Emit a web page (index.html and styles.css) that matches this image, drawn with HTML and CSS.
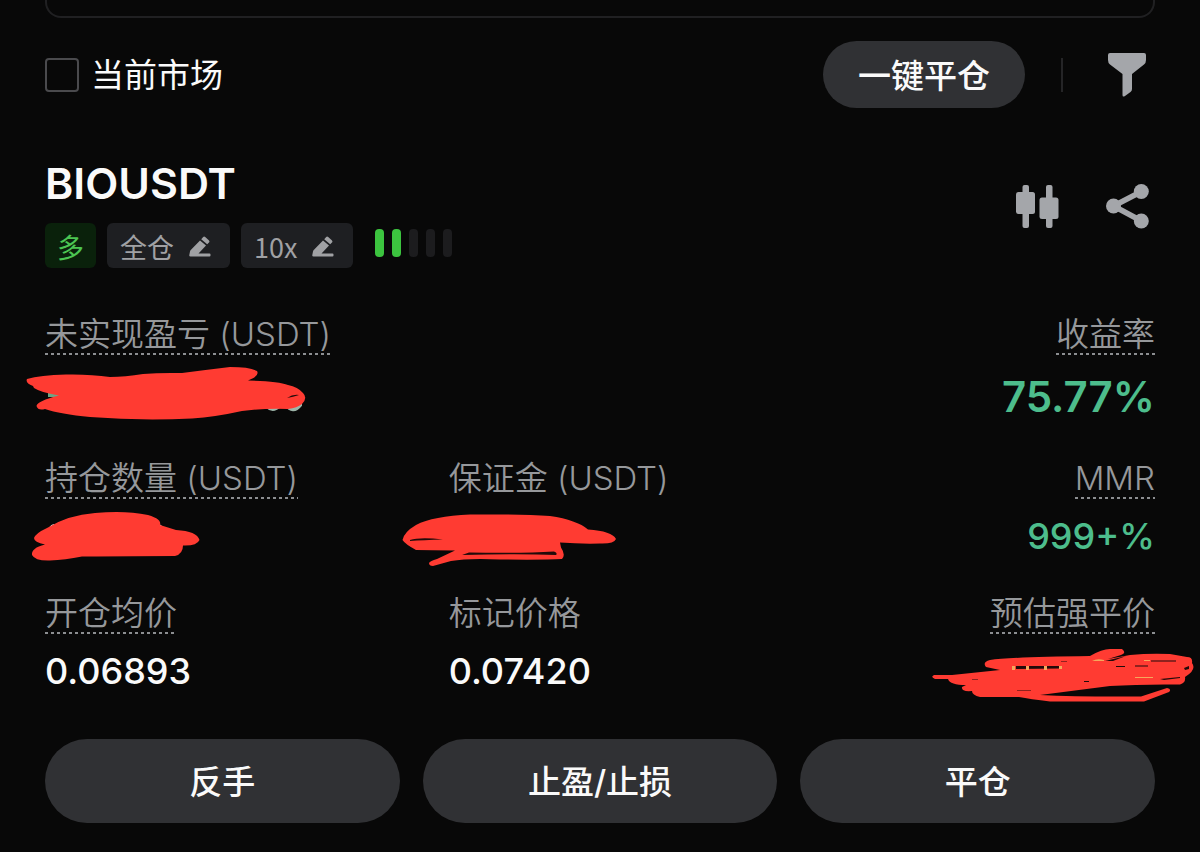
FILE: index.html
```html
<!DOCTYPE html>
<html lang="zh-CN">
<head>
<meta charset="utf-8">
<meta name="viewport" content="width=device-width, initial-scale=1">
<title>BIOUSDT</title>
<link rel="stylesheet" href="styles.css">
</head>
<body>
<main class="page">
  <div class="panel-end"></div>

  <div class="toolbar">
    <label class="market"><input class="market-box" type="checkbox">当前市场</label>
    <div class="toolbar-actions">
      <button class="pill pill-small" type="button">一键平仓</button>
      <span class="divider"></span>
      <button class="icon-button" type="button" aria-label="筛选">
        <svg width="38" height="44" viewBox="0 0 38 44"><path d="M2 0H36Q38 0 38 2V7Q38 10 36 11.500L24 21V36Q24 38 22.500 39L17 43Q14.500 44.500 14.500 42V21L2 11.500Q0 10 0 7V2Q0 0 2 0Z"/></svg>
      </button>
    </div>
  </div>

  <section class="position">
    <header class="position-head">
      <div>
        <h1 class="symbol">BIOUSDT</h1>
        <div class="tags">
          <span class="tag tag-long">多</span>
          <button class="tag" type="button">全仓
            <svg width="22" height="21" viewBox="0 0 22 21"><path d="M14 1.200Q15 0 16.200 1L19.800 4.200Q21 5.400 20 6.400L18.200 8.200L12.200 3.200ZM11 4.600L17 9.600L9.500 17.500H20.500Q21.500 17.500 21.500 18.500V19.500Q21.500 20.500 20.500 20.500H1.500Q0 20.500 .300 19L1 15.500Q1.200 14.500 2 13.700Z"/></svg>
          </button>
          <button class="tag" type="button">10x
            <svg width="22" height="21" viewBox="0 0 22 21"><path d="M14 1.200Q15 0 16.200 1L19.800 4.200Q21 5.400 20 6.400L18.200 8.200L12.200 3.200ZM11 4.600L17 9.600L9.500 17.500H20.500Q21.500 17.500 21.500 18.500V19.500Q21.500 20.500 20.500 20.500H1.500Q0 20.500 .300 19L1 15.500Q1.200 14.500 2 13.700Z"/></svg>
          </button>
          <span class="level"><i class="bar on"></i><i class="bar on"></i><i class="bar"></i><i class="bar"></i><i class="bar"></i></span>
        </div>
      </div>
      <div class="head-actions">
        <button class="icon-button" type="button" aria-label="K线">
          <svg width="43" height="43" viewBox="0 0 43 43"><rect x="6.500" y="0" width="6.500" height="43" rx="2"/><rect x="0" y="7" width="19" height="22" rx="2.500"/><rect x="30" y="0" width="6.500" height="43" rx="2"/><rect x="23.500" y="12.500" width="19" height="21.500" rx="2.500"/></svg>
        </button>
        <button class="icon-button" type="button" aria-label="分享">
          <svg width="43" height="45" viewBox="0 0 43 45"><path d="M35.500 7.500L7.500 22L35.500 37" fill="none" stroke="currentColor" stroke-width="5.500"/><circle cx="35.300" cy="7.500" r="7.500"/><circle cx="7.500" cy="22" r="7.500"/><circle cx="35.300" cy="37" r="7.500"/></svg>
        </button>
      </div>
    </header>

    <dl class="metrics">
      <div class="metric wide">
        <dt class="label hint">未实现盈亏 (USDT)</dt>
        <dd class="value large">
          <svg class="mark mark-pnl" width="290" height="57" viewBox="20 365 290 57" role="img" aria-label="已遮盖">
            <path class="peek-green" d="M48 393h11v4H48Z"/>
            <path class="peek-line" d="M267 406Q273 412 280 405M286 404Q293 414 300 405V396L295 390"/>
            <path d="M27 379Q40 375 66 374.500Q90 374 110 377Q125 377 143 374Q160 372.500 182 373Q205 370 230 367Q250 367 257 371Q260 376 248 380.500Q278 381 288 385Q298 387 303 393Q308 398 302 404Q297 408 288 409Q265 408 242 411Q215 417 192 418.500Q140 421 90 417Q60 414 45 409Q38 411 36.500 406Q37 401 59 395.500Q40 392 34 388L33 386Q25 383 27 379Z"/>
            <path class="slit" d="M287 398Q293 394 299 395Q293 397 287 398Z"/>
          </svg>
        </dd>
      </div>
      <div class="metric end">
        <dt class="label hint">收益率</dt>
        <dd class="value large up">75.77%</dd>
      </div>

      <div class="metric">
        <dt class="label hint">持仓数量 (USDT)</dt>
        <dd class="value">
          <svg class="mark mark-size" width="175" height="57" viewBox="30 508 175 57" role="img" aria-label="已遮盖">
            <path class="peek-white" d="M49 528Q51 524 55 524ZM153 527Q158 521 163 527Z"/>
            <path d="M34 538Q36 533 47 528Q68 515 95 513Q125 510 148 515Q162 519 160 525L176 530Q197 531 199.500 540Q197 546 183 545.500Q183 554 175 556Q140 556 82 556.500Q65 560 50 560.500Q35 561 32 555Q31 548 45 544.500Q34 542 34 538Z"/>
          </svg>
        </dd>
      </div>
      <div class="metric">
        <dt class="label">保证金 (USDT)</dt>
        <dd class="value">
          <svg class="mark mark-margin" width="225" height="62" viewBox="398 508 225 62" role="img" aria-label="已遮盖">
            <path d="M402.500 540Q404 532 416 525Q433 516 470 514.500Q520 514 550 516Q577 520 588 529.500Q612 531 616 539Q614 544 600 543.500Q580 544 560 542.500L561 547.500Q566 555 562 559Q545 560 500 559.500Q468 558 451 561L433 566Q429 566 429 563Q430 561 437 559L455 550.500Q430 550 416 550Q405 544 402.500 540Z"/>
            <path class="slit" d="M410 540Q420 537 443 539.500Q423 540 410 541ZM462 555L469 552.500Q520 553.500 554 551.500Q558 553 556 555Q520 553.500 462 555Z"/>
          </svg>
        </dd>
      </div>
      <div class="metric end">
        <dt class="label hint">MMR</dt>
        <dd class="value up">999+%</dd>
      </div>

      <div class="metric">
        <dt class="label hint">开仓均价</dt>
        <dd class="value">0.06893</dd>
      </div>
      <div class="metric">
        <dt class="label">标记价格</dt>
        <dd class="value">0.07420</dd>
      </div>
      <div class="metric end">
        <dt class="label hint">预估强平价</dt>
        <dd class="value">
          <svg class="mark mark-liq" width="272" height="60" viewBox="928 645 272 60" role="img" aria-label="已遮盖">
            <path d="M934 675L952 675L1000 670L986 667Q982 662 990 660Q1010 657 1090 656Q1102 649 1110 649L1122 649Q1127 653 1121 655L1108 659L1130 655Q1150 653 1170 654L1187 657Q1193 657 1192 663Q1197 670 1185 677Q1186 683 1180 684.500Q1140 684 1110 686L1040 695Q1080 697 1141 696.500L1167 688Q1172 689 1169 692L1144 701.500H1050Q1030 699 1019 697L980 697Q972 695 972 691Q961 692 962 687L966 685Q950 685 948 679L935 679Q930 677 934 675Z"/>
            <path class="slit" d="M1016 666L1061 666V668.500L1016 669ZM1105 661L1126 656L1113 661ZM1151 660.500H1176V661.500H1151ZM1116 666L1125 666V667H1116ZM1135 665.500H1148V666.500H1135ZM1160 679L1180 677V678L1164 680ZM1017 690.500H1031V691H1017ZM1084 681H1089V682H1084ZM1184 668L1189 666V669L1185 670ZM1061 661H1067V661.500H1061ZM972 679H978V679.500H972Z"/>
            <path class="peek-amber" d="M1012 666h3v4h-3ZM1026 666h3v4h-3ZM1044 666h3v4h-3ZM1059 666h3v3h-3ZM1092 661Q1097 658 1104 660V661ZM1144 660h6v1h-6ZM1135 677h18v1h-18Z"/>
          </svg>
        </dd>
      </div>
    </dl>

    <div class="actions">
      <button class="pill" type="button">反手</button>
      <button class="pill" type="button">止盈/止损</button>
      <button class="pill" type="button">平仓</button>
    </div>
  </section>
</main>
</body>
</html>
```

FILE: styles.css
```css
* {
  box-sizing: border-box;
}

body {
  margin: 0;
  background: #080808;
  color: #fafafa;
  font-family: Inter, "Noto Sans CJK SC", sans-serif;
}

button {
  border: 0;
  font: inherit;
  color: inherit;
  cursor: pointer;
}

svg {
  display: block;
  flex: none;
  fill: currentColor;
}

.page {
  padding: 0 45px 29px;
}

.panel-end {
  height: 18px;
  border: 2px solid #202022;
  border-top: 0;
  border-radius: 0 0 16px 16px;
}

.toolbar {
  display: flex;
  justify-content: space-between;
  align-items: center;
  margin-top: 23px;
}

.market {
  display: flex;
  align-items: center;
  gap: 12px;
  font-size: 33px;
  line-height: 46px;
}

.market-box {
  appearance: none;
  width: 34px;
  height: 34px;
  margin: 0;
  border: 2px solid #4a4a4d;
  border-radius: 4px;
}

.market-box:checked {
  background: #4a4a4d;
}

.toolbar-actions {
  display: flex;
  align-items: center;
  gap: 36px;
}

.pill {
  height: 84px;
  padding: 2px 35px 0;
  border-radius: 42px;
  background: #303134;
  font-size: 33px;
  font-weight: 500;
  line-height: 42px;
}

.pill-small {
  height: 67px;
}

.divider {
  width: 2px;
  height: 34px;
  background: #252527;
}

.icon-button {
  display: flex;
  justify-content: center;
  align-items: center;
  width: 56px;
  height: 56px;
  padding: 0;
  background: none;
  color: #a4a6aa;
}

.position-head {
  display: flex;
  justify-content: space-between;
  align-items: flex-start;
  margin-top: 49px;
}

.symbol {
  margin: 0 0 14px;
  font-size: 43px;
  font-weight: 600;
  line-height: 52px;
}

.tags {
  display: flex;
  align-items: center;
  gap: 11px;
}

.tag {
  display: flex;
  align-items: center;
  gap: 15px;
  height: 45px;
  padding: 2px 19px 0 13px;
  border-radius: 6px;
  background: #1e1f22;
  color: #a0a1a4;
  font-family: "Noto Sans CJK SC", sans-serif;
  font-size: 27px;
  line-height: 42px;
}

.tag-long {
  padding: 2px 12px 0;
  background: #0a210b;
  color: #4cc552;
}

.level {
  display: flex;
  gap: 8px;
  margin: 0 0 5px 11px;
}

.bar {
  width: 9px;
  height: 28px;
  border-radius: 4px;
  background: #1c1c1e;
}

.bar.on {
  background: #3cc43f;
}

.head-actions {
  display: flex;
  gap: 34px;
  padding-top: 21px;
}

.metrics {
  display: grid;
  grid-template-columns: 4fr 4fr 3fr;
  row-gap: 35px;
  margin: 45px 0 47px;
}

.metric {
  display: flex;
  flex-direction: column;
  align-items: flex-start;
  gap: 16px;
  white-space: nowrap;
}

.wide {
  grid-column: span 2;
}

.end {
  align-items: flex-end;
}

.label {
  height: 42px;
  color: #96989b;
  font-size: 33px;
  font-weight: 350;
  line-height: 42px;
}

.hint {
  background: repeating-linear-gradient(90deg, #8c8e91 0 3px, transparent 3px 6px) left bottom / 100% 2px no-repeat;
}

.value {
  position: relative;
  height: 42px;
  margin: 0;
  font-size: 36px;
  font-weight: 500;
  line-height: 42px;
}

.metric > .value:has(.mark) {
  align-self: stretch;
}

.large {
  height: 51px;
  font-size: 42px;
  font-weight: 600;
  line-height: 51px;
}

.up {
  color: #4dbd8c;
}

.mark {
  position: absolute;
  fill: #ff3b32;
}

.mark-pnl {
  left: -25px;
  top: -6px;
}

.mark-size {
  left: -15px;
  top: -7px;
}

.mark-margin {
  left: -51px;
  top: -7px;
}

.mark-liq {
  right: -45px;
  top: -5px;
}

.slit {
  fill: #210b0a;
}

.peek-green {
  fill: #6aa586;
}

.peek-line {
  fill: none;
  stroke: #9db5a9;
  stroke-width: 4;
}

.peek-white {
  fill: #f4f4f4;
}

.peek-amber {
  fill: #f6a75c;
}

.actions {
  display: grid;
  grid-template-columns: repeat(3, 1fr);
  gap: 23px;
}
```
